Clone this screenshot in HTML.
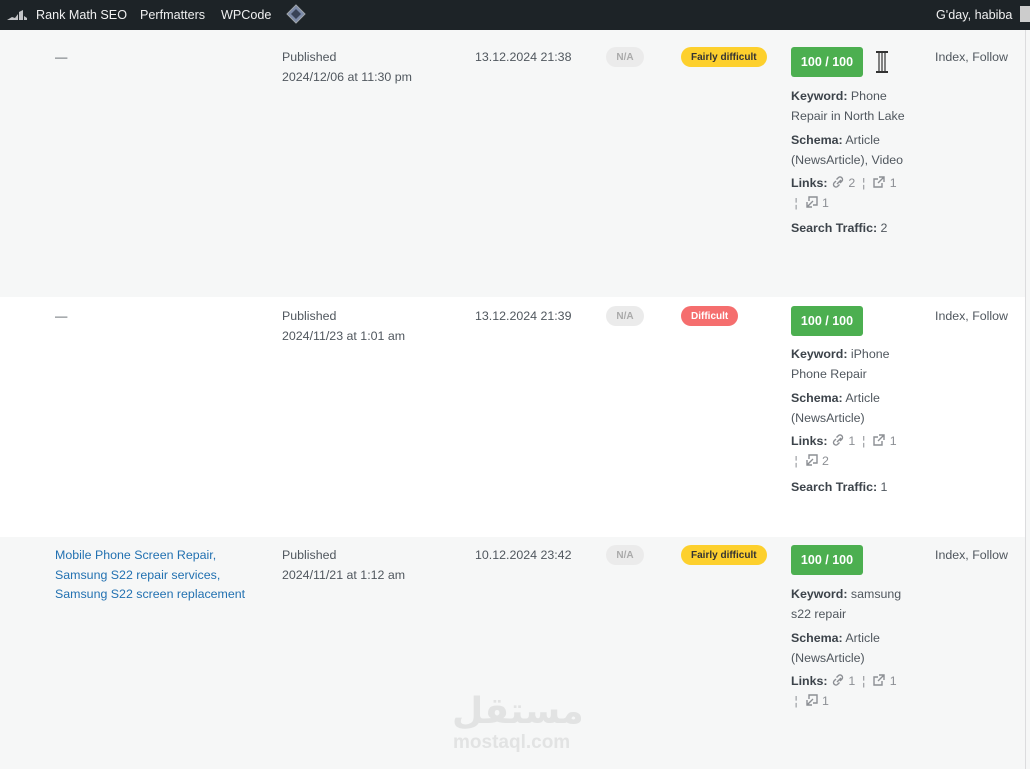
<!DOCTYPE html>
<html><head><meta charset="utf-8"><style>
*{margin:0;padding:0;box-sizing:border-box}
body{width:1030px;height:769px;overflow:hidden;background:#f6f7f7;font-family:"Liberation Sans",sans-serif;font-size:12.4px;color:#50575e;position:relative}
.bar{position:absolute;left:0;top:0;width:1030px;height:30px;background:#1d2327;color:#f0f0f1;font-size:12.6px}
.bar span{position:absolute;top:8px}
.row{position:absolute;left:0;width:1025px}
.a{position:absolute;line-height:19.5px;margin-top:1px}
.na{position:absolute;width:38px;height:20px;border-radius:10px;background:#ebebeb;color:#aaa;font-size:10px;font-weight:bold;text-align:center;line-height:21px}
.diff{position:absolute;height:20px;border-radius:10px;font-size:10px;font-weight:bold;text-align:center;line-height:21px;padding:0 10px}
.score{position:absolute;width:72px;height:30px;background:#4caf50;color:#fff;border-radius:3px;font-weight:bold;font-size:12.5px;text-align:center;line-height:31px}
b{color:#3c434a}
.lk{color:#2271b1}
.g{color:#8c8f94}
svg.i{vertical-align:-2px}
</style></head><body>
<div class="bar">
<svg style="position:absolute;left:7px;top:9px" width="20" height="12"><path d="M0 11 L5 8 L8 9 L11 5 L11 11Z M12 3 L16 1 L16 11 L12 11Z M17 7 L20 9 L20 11 L17 11Z" fill="#c3c4c7"/></svg>
<span style="left:36px">Rank Math SEO</span><span style="left:140px">Perfmatters</span><span style="left:221px">WPCode</span>
<svg style="position:absolute;left:286px;top:4px" width="20" height="20"><path d="M10 1 L19 10 L10 19 L1 10Z" fill="#7c8aa8" stroke="#a0a5aa"/><path d="M10 5 L15 10 L10 15 L5 10Z" fill="#394357"/></svg>
<span style="left:936px">G'day, habiba</span>
<div style="position:absolute;left:1020px;top:6px;width:10px;height:16px;background:#ccc"></div>
</div>
<div style="position:absolute;left:1025px;top:30px;width:1px;height:739px;background:#dcdcde"></div>
<div class="row" style="top:30px;height:267px;background:#f6f7f7"></div>
<div class="row" style="top:297px;height:240px;background:#fff"></div>
<div class="row" style="top:537px;height:232px;background:#f6f7f7"></div>

<!-- row1 -->
<div class="a" style="left:55px;top:47px">—</div>
<div class="a" style="left:282px;top:47px">Published<br>2024/12/06 at 11:30 pm</div>
<div class="a" style="left:475px;top:47px">13.12.2024 21:38</div>
<div class="na" style="left:606px;top:47px">N/A</div>
<div class="diff" style="left:681px;top:47px;background:#fdd02d;color:#333">Fairly difficult</div>
<div class="score" style="left:791px;top:47px">100 / 100</div>
<svg style="position:absolute;left:875px;top:50px" width="14" height="24"><rect x="1" y="1" width="12" height="2" fill="#333"/><path d="M4 3v18M7 3v18M10 3v18" stroke="#333" stroke-width="1.2"/><rect x="1" y="21" width="12" height="2" fill="#333"/></svg>
<div class="a" style="left:935px;top:47px">Index, Follow</div>
<div class="a" style="left:791px;top:86px"><b>Keyword:</b> Phone<br>Repair in North Lake</div>
<div class="a" style="left:791px;top:130px"><b>Schema:</b> Article<br>(NewsArticle), Video</div>
<div class="a" style="left:791px;top:173px"><b>Links:</b> <span class="g"><svg class="i" width="14" height="14"><path d="M6 9l4-4M5 6l-2 2a2.5 2.5 0 0 0 3.5 3.5l2-2M9 8l2-2A2.5 2.5 0 0 0 7.5 2.5l-2 2" stroke="#8c8f94" stroke-width="1.4" fill="none"/></svg> 2 &nbsp;¦ &nbsp;<svg class="i" width="14" height="14"><path d="M7 2h5v5M12 2L6 8M10 8v4H2V4h4" stroke="#8c8f94" stroke-width="1.4" fill="none"/></svg> 1<br>&nbsp;¦ &nbsp;<svg class="i" width="14" height="14"><path d="M2 7v5h5M2 12l6-6M4 6V2h8v8h-4" stroke="#8c8f94" stroke-width="1.4" fill="none"/></svg> 1</span></div>
<div class="a" style="left:791px;top:218px"><b>Search Traffic:</b> 2</div>

<!-- row2 -->
<div class="a" style="left:55px;top:306px">—</div>
<div class="a" style="left:282px;top:306px">Published<br>2024/11/23 at 1:01 am</div>
<div class="a" style="left:475px;top:306px">13.12.2024 21:39</div>
<div class="na" style="left:606px;top:306px">N/A</div>
<div class="diff" style="left:681px;top:306px;background:#f56e6e;color:#fff">Difficult</div>
<div class="score" style="left:791px;top:306px">100 / 100</div>
<div class="a" style="left:935px;top:306px">Index, Follow</div>
<div class="a" style="left:791px;top:344px"><b>Keyword:</b> iPhone<br>Phone Repair</div>
<div class="a" style="left:791px;top:388px"><b>Schema:</b> Article<br>(NewsArticle)</div>
<div class="a" style="left:791px;top:431px"><b>Links:</b> <span class="g"><svg class="i" width="14" height="14"><path d="M6 9l4-4M5 6l-2 2a2.5 2.5 0 0 0 3.5 3.5l2-2M9 8l2-2A2.5 2.5 0 0 0 7.5 2.5l-2 2" stroke="#8c8f94" stroke-width="1.4" fill="none"/></svg> 1 &nbsp;¦ &nbsp;<svg class="i" width="14" height="14"><path d="M7 2h5v5M12 2L6 8M10 8v4H2V4h4" stroke="#8c8f94" stroke-width="1.4" fill="none"/></svg> 1<br>&nbsp;¦ &nbsp;<svg class="i" width="14" height="14"><path d="M2 7v5h5M2 12l6-6M4 6V2h8v8h-4" stroke="#8c8f94" stroke-width="1.4" fill="none"/></svg> 2</span></div>
<div class="a" style="left:791px;top:477px"><b>Search Traffic:</b> 1</div>

<!-- row3 -->
<div class="a lk" style="left:55px;top:545px">Mobile Phone Screen Repair,<br>Samsung S22 repair services,<br>Samsung S22 screen replacement</div>
<div class="a" style="left:282px;top:545px">Published<br>2024/11/21 at 1:12 am</div>
<div class="a" style="left:475px;top:545px">10.12.2024 23:42</div>
<div class="na" style="left:606px;top:545px">N/A</div>
<div class="diff" style="left:681px;top:545px;background:#fdd02d;color:#333">Fairly difficult</div>
<div class="score" style="left:791px;top:545px">100 / 100</div>
<div class="a" style="left:935px;top:545px">Index, Follow</div>
<div class="a" style="left:791px;top:584px"><b>Keyword:</b> samsung<br>s22 repair</div>
<div class="a" style="left:791px;top:628px"><b>Schema:</b> Article<br>(NewsArticle)</div>
<div class="a" style="left:791px;top:671px"><b>Links:</b> <span class="g"><svg class="i" width="14" height="14"><path d="M6 9l4-4M5 6l-2 2a2.5 2.5 0 0 0 3.5 3.5l2-2M9 8l2-2A2.5 2.5 0 0 0 7.5 2.5l-2 2" stroke="#8c8f94" stroke-width="1.4" fill="none"/></svg> 1 &nbsp;¦ &nbsp;<svg class="i" width="14" height="14"><path d="M7 2h5v5M12 2L6 8M10 8v4H2V4h4" stroke="#8c8f94" stroke-width="1.4" fill="none"/></svg> 1<br>&nbsp;¦ &nbsp;<svg class="i" width="14" height="14"><path d="M2 7v5h5M2 12l6-6M4 6V2h8v8h-4" stroke="#8c8f94" stroke-width="1.4" fill="none"/></svg> 1</span></div>

<div style="position:absolute;left:452px;top:690px;font-size:36px;font-weight:bold;color:#e2e3e3;font-family:'Liberation Sans','DejaVu Sans',sans-serif">مستقل</div>
<div style="position:absolute;left:453px;top:732px;font-size:19px;font-weight:bold;color:#e2e3e3">mostaql.com</div>
</body></html>
